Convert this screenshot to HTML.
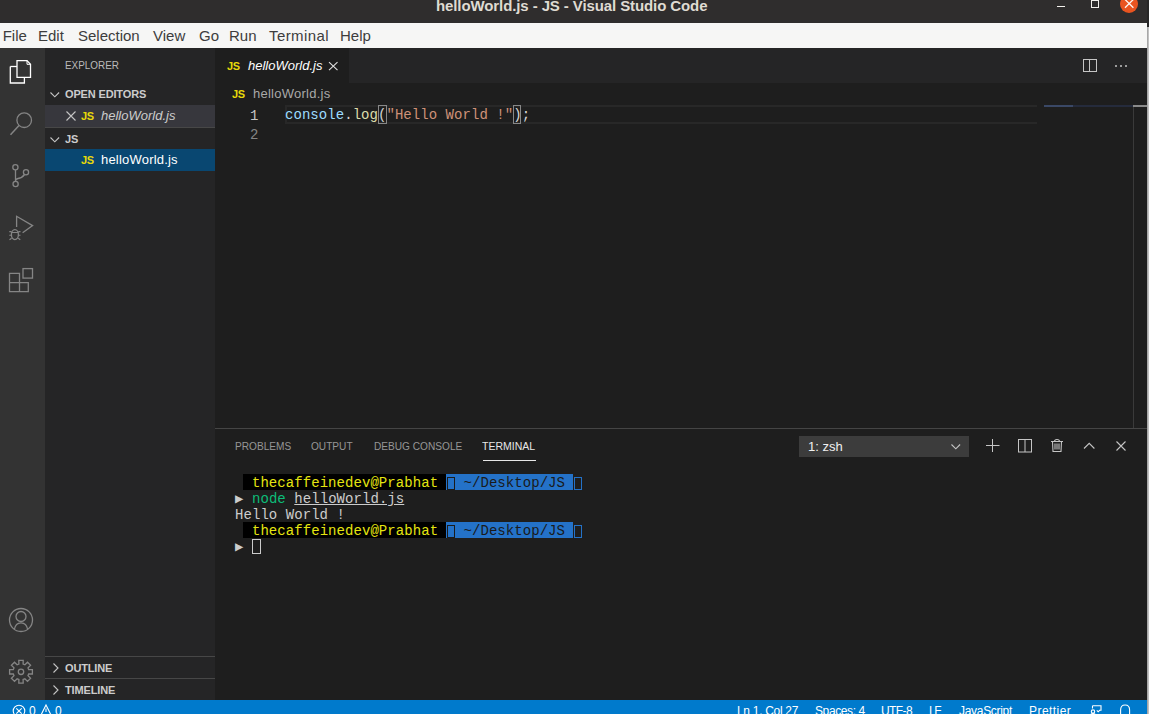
<!DOCTYPE html>
<html><head><meta charset="utf-8">
<style>
*{margin:0;padding:0;box-sizing:border-box}
html,body{width:1149px;height:714px;overflow:hidden;background:#0c0c0c;font-family:"Liberation Sans",sans-serif}
.a{position:absolute;white-space:pre}
svg{position:absolute;overflow:visible}
#title{left:0;top:0;width:1147px;height:23px;background:#2f2d2d}
#menu{left:0;top:23px;width:1147px;height:25px;background:#f6f6f5}
#act{left:0;top:48px;width:45px;height:652px;background:#333333}
#side{left:45px;top:48px;width:170px;height:652px;background:#252526}
#editor{left:215px;top:48px;width:932px;height:380px;background:#1e1e1e}
#tabs{left:215px;top:48px;width:932px;height:35px;background:#252526}
#panel{left:215px;top:428px;width:932px;height:272px;background:#1e1e1e;border-top:1px solid #454545}
#status{left:0;top:700px;width:1147px;height:14px;background:#007acc}
.mono{font-family:"Liberation Mono",monospace}
.menu{top:23px;height:25px;line-height:25px;font-size:15px;color:#3d3d3d}
.js{font-weight:700;font-size:11px;color:#e8d90a;letter-spacing:-0.3px}
.hdr{font-weight:700;font-size:11px;color:#cccccc;letter-spacing:-0.15px}
.ptab{top:438px;font-size:11px;color:#969696;line-height:16px;transform:scaleX(0.92);transform-origin:0 0}
.sb{font-size:12px;color:#fff;line-height:14px;top:704px}
.term{font-family:"Liberation Mono",monospace;font-size:14px;letter-spacing:0.06px;line-height:16px;color:#cccccc}
</style></head><body>
<!-- title bar -->
<div class="a" id="title"></div>
<div class="a" style="left:1147px;top:0;width:2px;height:27px;background:#272626"></div>
<div class="a" style="left:1147px;top:27px;width:2px;height:687px;background:linear-gradient(to right,#9a9a9a,#cfcfcf)"></div>
<div class="a" style="left:436px;top:-4.5px;font-size:15px;font-weight:700;color:#dfdbd2;line-height:20px;letter-spacing:-0.1px">helloWorld.js - JS - Visual Studio Code</div>
<div class="a" style="left:1057px;top:6px;width:8px;height:1.4px;background:#f2f0ec"></div>
<div class="a" style="left:1091px;top:-0.5px;width:8.2px;height:8.6px;border:1.4px solid #f2f0ec"></div>
<div class="a" style="left:1119.9px;top:-5px;width:18.4px;height:18.4px;border-radius:50%;background:#e95420"></div>
<svg style="left:1120px;top:-5px" width="18" height="18"><path d="M5 4.4 L13.4 12.8 M13.4 4.4 L5 12.8" stroke="#fdf6f2" stroke-width="1.3"/></svg>

<!-- menu -->
<div class="a" id="menu"></div>
<div class="a menu" style="left:2.7px">File</div>
<div class="a menu" style="left:38px">Edit</div>
<div class="a menu" style="left:78px">Selection</div>
<div class="a menu" style="left:153px">View</div>
<div class="a menu" style="left:199px">Go</div>
<div class="a menu" style="left:229px">Run</div>
<div class="a menu" style="left:269px;letter-spacing:0.4px">Terminal</div>
<div class="a menu" style="left:340px">Help</div>

<!-- activity bar -->
<div class="a" id="act"></div>
<div class="a" style="left:0;top:48px;width:2px;height:48px;background:#333"></div>
<svg style="left:0;top:48px" width="45" height="260" fill="none" stroke-width="1.3">
  <!-- files -->
  <path d="M10.3 18.5 V35 H24.4 V30" stroke="#fff"/>
  <path d="M17 12.6 H27 L30.5 16.3 V29.4 H17 Z" stroke="#fff"/>
  <path d="M27 12.6 V16.3 H30.5" stroke="#fff" stroke-width="1"/>
  <path d="M10.3 18.5 H17" stroke="#fff"/>
  <!-- search -->
  <circle cx="24.2" cy="72.2" r="7.3" stroke="#858585"/>
  <path d="M19 77.5 L10.5 86.8" stroke="#858585" stroke-width="1.5"/>
  <!-- source control -->
  <circle cx="15.4" cy="119.3" r="2.6" stroke="#858585"/>
  <circle cx="15.6" cy="136" r="2.6" stroke="#858585"/>
  <circle cx="26" cy="124.2" r="2.6" stroke="#858585"/>
  <path d="M15.5 122 V133.4 M24.6 126.5 Q22 130 18 130.5 Q15.5 131 15.5 133" stroke="#858585"/>
  <!-- debug -->
  <path d="M16.6 179 V168.3 L32.6 177.6 L22.6 184.7" stroke="#858585"/>
  <ellipse cx="14.9" cy="186.6" rx="3.5" ry="5" stroke="#858585"/>
  <path d="M9.3 183.6 H11.5 M18.3 183.6 H20.5 M9.3 187.3 H11.5 M18.3 187.3 H20.5 M9.5 191.8 L11.6 190.2 M20.3 191.8 L18.2 190.2 M11.5 184.5 H18.3" stroke="#858585" stroke-width="1.1"/>
  <!-- extensions -->
  <path d="M9.5 225.3 H19.5 V234.7 H28.3 V243.7 H9.5 Z M9.5 234.7 H19.5 V243.7" stroke="#858585"/>
  <rect x="23" y="220.6" width="9.5" height="9.5" stroke="#858585"/>
</svg>
<svg style="left:0;top:600px" width="45" height="100" fill="none" stroke="#858585" stroke-width="1.3">
  <circle cx="21" cy="20" r="11.5"/>
  <circle cx="21" cy="16.5" r="5"/>
  <path d="M14.3 29.5 Q15.5 22.8 21 22.8 Q26.5 22.8 27.7 29.5"/>
  <path d="M18.9 64.1 L18.8 60.4 L23.2 60.4 L23.1 64.1 L24.9 64.8 L27.5 62.2 L30.6 65.3 L28.0 67.9 L28.7 69.7 L32.4 69.6 L32.4 74.0 L28.7 73.9 L28.0 75.7 L30.6 78.3 L27.5 81.4 L24.9 78.8 L23.1 79.5 L23.2 83.2 L18.8 83.2 L18.9 79.5 L17.1 78.8 L14.5 81.4 L11.4 78.3 L14.0 75.7 L13.3 73.9 L9.6 74.0 L9.6 69.6 L13.3 69.7 L14.0 67.9 L11.4 65.3 L14.5 62.2 L17.1 64.8 Z"/>
  <circle cx="21" cy="71.8" r="2.7"/>
</svg>

<!-- sidebar -->
<div class="a" id="side"></div>
<div class="a" style="left:65px;top:57px;font-size:11px;color:#bbbbbb;line-height:16px;transform:scaleX(0.9);transform-origin:0 0">EXPLORER</div>
<svg style="left:49px;top:90px" width="12" height="10" fill="none" stroke="#c5c5c5" stroke-width="1.1"><path d="M1.5 2.5 L5.8 6.8 L10.1 2.5"/></svg>
<div class="a hdr" style="left:65px;top:86px;line-height:16px">OPEN EDITORS</div>
<div class="a" style="left:45px;top:105px;width:170px;height:22px;background:#37373d"></div>
<svg style="left:65px;top:110px" width="12" height="12" fill="none" stroke="#c5c5c5" stroke-width="1.1"><path d="M1.5 1.5 L10.5 10.5 M10.5 1.5 L1.5 10.5"/></svg>
<div class="a js" style="left:81px;top:108px;line-height:16px">JS</div>
<div class="a" style="left:101px;top:108px;font-size:13px;font-style:italic;color:#cccccc;line-height:16px">helloWorld.js</div>
<div class="a" style="left:45px;top:127px;width:170px;height:1px;background:#474747"></div>
<svg style="left:49px;top:135px" width="12" height="10" fill="none" stroke="#c5c5c5" stroke-width="1.1"><path d="M1.5 2.5 L5.8 6.8 L10.1 2.5"/></svg>
<div class="a hdr" style="left:65px;top:131px;line-height:16px">JS</div>
<div class="a" style="left:45px;top:149px;width:170px;height:22px;background:#094771"></div>
<div class="a js" style="left:81px;top:152px;line-height:16px">JS</div>
<div class="a" style="left:101px;top:152px;font-size:13px;color:#ffffff;line-height:16px;letter-spacing:0.2px">helloWorld.js</div>

<div class="a" style="left:45px;top:656px;width:170px;height:1px;background:#474747"></div>
<svg style="left:51px;top:662px" width="10" height="12" fill="none" stroke="#c5c5c5" stroke-width="1.1"><path d="M2.5 1.5 L7 6 L2.5 10.5"/></svg>
<div class="a hdr" style="left:65px;top:660px;line-height:16px">OUTLINE</div>
<div class="a" style="left:45px;top:678px;width:170px;height:1px;background:#474747"></div>
<svg style="left:51px;top:684px" width="10" height="12" fill="none" stroke="#c5c5c5" stroke-width="1.1"><path d="M2.5 1.5 L7 6 L2.5 10.5"/></svg>
<div class="a hdr" style="left:65px;top:682px;line-height:16px">TIMELINE</div>

<!-- editor -->
<div class="a" id="editor"></div>
<div class="a" id="tabs"></div>
<div class="a" style="left:215px;top:48px;width:134px;height:35px;background:#1e1e1e"></div>
<div class="a js" style="left:227px;top:58px;line-height:16px">JS</div>
<div class="a" style="left:248px;top:58px;font-size:13px;font-style:italic;color:#ffffff;line-height:16px">helloWorld.js</div>
<svg style="left:328px;top:61px" width="12" height="12" fill="none" stroke="#e0e0e0" stroke-width="1.1"><path d="M1 1.2 L9.5 9.2 M9.5 1.2 L1 9.2"/></svg>
<svg style="left:1082px;top:58px" width="16" height="16" fill="none" stroke="#c5c5c5" stroke-width="1"><rect x="1.5" y="1.5" width="13" height="12"/><path d="M7.5 1.5 V13.5"/></svg>
<svg style="left:1113px;top:62px" width="16" height="8" fill="#c5c5c5"><circle cx="3" cy="4" r="1"/><circle cx="8" cy="4" r="1"/><circle cx="13" cy="4" r="1"/></svg>

<div class="a js" style="left:232px;top:86px;line-height:16px">JS</div>
<div class="a" style="left:253px;top:86px;font-size:13px;color:#a9a9a9;line-height:16px;letter-spacing:0.25px">helloWorld.js</div>

<div class="a" style="left:285px;top:105px;width:760px;height:19px;border:2px solid #282828"></div>
<div class="a" style="left:1037px;top:104px;width:96px;height:22px;background:#1e1e1e"></div>
<div class="a mono" style="left:250px;top:107px;font-size:14px;line-height:19px;color:#c6c6c6">1</div>
<div class="a mono" style="left:250px;top:126px;font-size:14px;line-height:19px;color:#858585">2</div>
<div class="a" style="left:378px;top:105px;width:9px;height:19px;border:1px solid #888"></div>
<div class="a" style="left:513px;top:105px;width:8px;height:19px;border:1px solid #888"></div>
<div class="a mono" style="left:285px;top:106px;font-size:14px;letter-spacing:0.05px;line-height:19px;color:#d4d4d4"><span style="color:#9cdcfe">console</span>.<span style="color:#dcdcaa">log</span>(<span style="color:#ce9178">"Hello World !"</span>);</div>

<!-- minimap / scrollbar -->
<div class="a" style="left:1044px;top:105px;width:29px;height:2px;background:#3a4866"></div>
<div class="a" style="left:1073px;top:105px;width:60px;height:2px;background:#252b3c"></div>
<div class="a" style="left:1133px;top:105px;width:1px;height:323px;background:#3a3a3a"></div>
<div class="a" style="left:1133px;top:105px;width:14px;height:2px;background:#8a8a8a"></div>

<!-- panel -->
<div class="a" id="panel"></div>
<div class="a ptab" style="left:235px">PROBLEMS</div>
<div class="a ptab" style="left:311px">OUTPUT</div>
<div class="a ptab" style="left:374px">DEBUG CONSOLE</div>
<div class="a ptab" style="left:482px;color:#e7e7e7;transform:scaleX(0.955)">TERMINAL</div>
<div class="a" style="left:483px;top:460px;width:53px;height:1px;background:#e7e7e7"></div>

<div class="a" style="left:799px;top:436px;width:170px;height:21px;background:#3c3c3c"></div>
<div class="a" style="left:808px;top:439px;font-size:13px;color:#f0f0f0;line-height:16px">1: zsh</div>
<svg style="left:950px;top:442px" width="12" height="10" fill="none" stroke="#c5c5c5" stroke-width="1.1"><path d="M1.5 2.5 L5.8 6.8 L10.1 2.5"/></svg>
<svg style="left:984px;top:438px" width="16" height="16" fill="none" stroke="#c5c5c5" stroke-width="1"><path d="M8.5 1 V14 M2 7.5 H15.5"/></svg>
<svg style="left:1017px;top:438px" width="16" height="16" fill="none" stroke="#c5c5c5" stroke-width="1"><rect x="1.5" y="1.5" width="13" height="12.5"/><path d="M8 1.5 V14"/></svg>
<svg style="left:1049px;top:438px" width="16" height="16" fill="none" stroke="#c5c5c5" stroke-width="1.1"><path d="M2 3.5 H14 M5.5 3.5 Q5.5 1.5 8 1.5 Q10.5 1.5 10.5 3.5 M3.5 3.5 L4 13.5 H12 L12.5 3.5 M6 5.5 V11.5 M8 5.5 V11.5 M10 5.5 V11.5"/></svg>
<svg style="left:1082px;top:438px" width="14" height="16" fill="none" stroke="#c5c5c5" stroke-width="1.1"><path d="M2 10.5 L7.2 5.3 L12.4 10.5"/></svg>
<svg style="left:1114px;top:438px" width="14" height="16" fill="none" stroke="#c5c5c5" stroke-width="1.1"><path d="M2.5 3.5 L11.5 12.5 M11.5 3.5 L2.5 12.5"/></svg>

<!-- terminal -->
<div class="a" style="left:243px;top:474px;width:203px;height:16px;background:#000"></div>
<div class="a" style="left:446px;top:474px;width:127px;height:16px;background:#2472c8"></div>
<div class="a" style="left:243px;top:522px;width:203px;height:16px;background:#000"></div>
<div class="a" style="left:446px;top:522px;width:127px;height:16px;background:#2472c8"></div>
<div class="a term" style="left:235px;top:475px">  <span style="color:#e5e510">thecaffeinedev@Prabhat</span> <span style="color:#000"> </span> <span style="color:#1a1a1a">~/Desktop/JS</span></div>
<div class="a term" style="left:235px;top:491px">▶ <span style="color:#23d18b;color:#0dbc79">node</span> <span style="text-decoration:underline">helloWorld.js</span></div>
<div class="a term" style="left:235px;top:507px">Hello World !</div>
<div class="a term" style="left:235px;top:523px">  <span style="color:#e5e510">thecaffeinedev@Prabhat</span> <span style="color:#000"> </span> <span style="color:#1a1a1a">~/Desktop/JS</span></div>
<div class="a term" style="left:235px;top:539px">▶</div>
<div class="a" style="left:447px;top:477px;width:8px;height:13px;border:1px solid #1b1b1b"></div>
<div class="a" style="left:574px;top:477px;width:8px;height:13px;border:1px solid #2472c8"></div>
<div class="a" style="left:447px;top:525px;width:8px;height:13px;border:1px solid #1b1b1b"></div>
<div class="a" style="left:574px;top:525px;width:8px;height:13px;border:1px solid #2472c8"></div>
<div class="a" style="left:252px;top:539px;width:9px;height:15px;border:1px solid #cccccc"></div>

<!-- status bar -->
<div class="a" id="status"></div>
<svg style="left:12px;top:704px" width="14" height="14" fill="none" stroke="#fff" stroke-width="1.1"><circle cx="7" cy="7" r="5.8"/><path d="M4.3 4.3 L9.7 9.7 M9.7 4.3 L4.3 9.7"/></svg>
<div class="a sb" style="left:29px">0</div>
<svg style="left:40px;top:704px" width="12" height="12" fill="none" stroke="#fff" stroke-width="1.1"><path d="M6 1 L11 11 H1 Z M6 4.5 V8"/></svg>
<div class="a sb" style="left:55px">0</div>
<div class="a sb" style="left:737px;letter-spacing:-0.3px">Ln 1, Col 27</div>
<div class="a sb" style="left:815px;letter-spacing:-0.4px">Spaces: 4</div>
<div class="a sb" style="left:881px;letter-spacing:-0.6px">UTF-8</div>
<div class="a sb" style="left:929px;letter-spacing:-1.5px">LF</div>
<div class="a sb" style="left:959px;letter-spacing:-0.3px">JavaScript</div>
<div class="a sb" style="left:1029px;letter-spacing:0.45px">Prettier</div>
<svg style="left:1089px;top:704px" width="14" height="12" fill="none" stroke="#fff" stroke-width="1.1"><path d="M3.5 1.8 H12 V6.3 H10.6 L9.2 7.8 L7.8 6.3 M3.5 1.8 V4.5 M0.8 12 Q1.5 9.6 4 9.6 Q6.5 9.6 7.2 12"/><circle cx="4" cy="7.6" r="1.7"/></svg>
<svg style="left:1118px;top:704px" width="14" height="12" fill="none" stroke="#fff" stroke-width="1.1"><path d="M2.6 12 V6 Q2.6 1 7.1 1 Q11.6 1 11.6 6 V12"/></svg>
</body></html>
